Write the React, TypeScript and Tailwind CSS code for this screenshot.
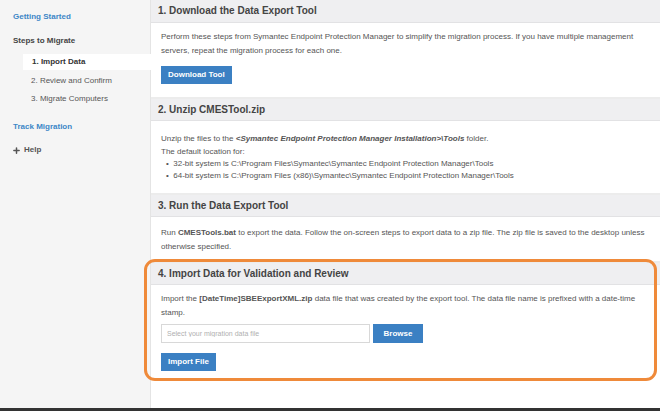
import { Plus } from 'lucide-react'

const FONT = { fontFamily: '"Liberation Sans", Arial, sans-serif' }

function SectionHeader({ title, className = 'h-[22px]' }: { title: string; className?: string }) {
  return (
    <div className={`${className} flex items-center px-[7px] bg-[#efeff1] border-b border-[#e2e2e4] text-[10px] font-bold text-[#444]`}>
      {title}
    </div>
  )
}

function BlueButton({ label, className = '' }: { label: string; className?: string }) {
  return (
    <button className={`h-[18px] px-[7px] bg-[#3b80c3] text-white text-[8px] font-bold leading-none ${className}`}>
      {label}
    </button>
  )
}

function Sidebar() {
  return (
    <div className="w-[151px] shrink-0 bg-[#f5f5f5] border-r border-[#e4e4e4] pt-[11px] text-[8px] leading-[12px] font-bold">
      <div className="pl-[13px] text-[#3d87c7]">Getting Started</div>
      <div className="pl-[13px] mt-[12px] text-[#444]">Steps to Migrate</div>
      <div className="mt-[7px] ml-[23px] -mr-px h-[16px] flex items-center pl-[9px] bg-white text-[#333]">1. Import Data</div>
      <div className="pl-[31px] mt-[2px] h-[18px] flex items-center font-normal text-[#555]">2. Review and Confirm</div>
      <div className="pl-[31px] h-[18px] flex items-center font-normal text-[#555]">3. Migrate Computers</div>
      <div className="pl-[13px] mt-[13px] text-[#3d87c7]">Track Migration</div>
      <div className="pl-[12px] mt-[11px] flex items-center gap-[3px] text-[#555]">
        <Plus size={9} strokeWidth={4} />
        Help
      </div>
    </div>
  )
}

export default function App() {
  return (
    <div className="w-[660px] h-[411px] flex flex-col overflow-hidden bg-white" style={FONT}>
      <div className="flex flex-1 min-h-0">
        <Sidebar />
        <div className="flex-1 min-w-0 text-[8px] text-[#555] leading-[14px]">
          <div className="border-b-2 border-[#ececec]">
            <SectionHeader title="1. Download the Data Export Tool" className="h-[23px]" />
            <div className="px-[10px] pt-[7px] pb-[13px]">
              <p>
                Perform these steps from Symantec Endpoint Protection Manager to simplify the migration process. If you have multiple management servers, repeat the migration process for each one.
              </p>
              <BlueButton label="Download Tool" className="mt-[8px]" />
            </div>
          </div>

          <div className="border-b-2 border-[#ececec]">
            <SectionHeader title="2. Unzip CMESTool.zip" />
            <div className="px-[10px] pt-[12px] pb-[11px] leading-[12px]">
              <p>
                Unzip the files to the{' '}
                <b className="italic">&lt;Symantec Endpoint Protection Manager Installation&gt;\Tools</b> folder.
              </p>
              <p className="mt-[1px]">The default location for:</p>
              <ul className="pl-[5px]">
                <li>•&nbsp;&nbsp;32-bit system is C:\Program Files\Symantec\Symantec Endpoint Protection Manager\Tools</li>
                <li>•&nbsp;&nbsp;64-bit system is C:\Program Files (x86)\Symantec\Symantec Endpoint Protection Manager\Tools</li>
              </ul>
            </div>
          </div>

          <div className="border-b-2 border-[#ececec]">
            <SectionHeader title="3. Run the Data Export Tool" />
            <div className="px-[10px] pt-[9px] pb-[7px]">
              <p>
                Run <b>CMESTools.bat</b> to export the data. Follow the on-screen steps to export data to a zip file. The zip file is saved to the desktop unless otherwise specified.
              </p>
            </div>
          </div>

          <div className="relative">
            <SectionHeader title="4. Import Data for Validation and Review" />
            <div className="px-[10px] pt-[7px] pb-[6px]">
              <p>
                Import the <b>[DateTime]SBEExportXML.zip</b> data file that was created by the export tool. The data file name is prefixed with a date-time stamp.
              </p>
              <div className="mt-[4px] flex gap-[3px]">
                <input
                  className="w-[209px] h-[19px] border border-[#d8d8d8] px-[5px] text-[7px] outline-none placeholder:text-[#b0b0b0]"
                  placeholder="Select your migration data file"
                />
                <BlueButton label="Browse" className="w-[50px] h-[19px]" />
              </div>
              <BlueButton label="Import File" className="mt-[10px]" />
            </div>
            <div className="absolute -left-[7px] right-[3px] -top-[4px] -bottom-[4px] border-[3px] border-[#ef8a3a] rounded-[11px] pointer-events-none" />
          </div>
        </div>
      </div>
      <div className="h-[3px] bg-[#333]" />
    </div>
  )
}
